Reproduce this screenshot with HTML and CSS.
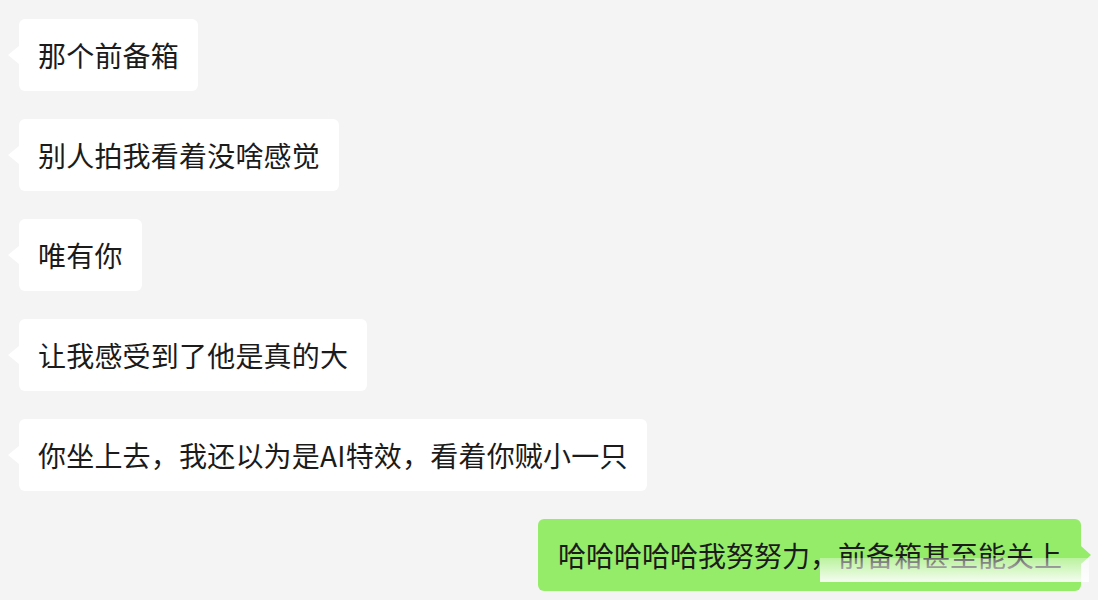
FILE: index.html
```html
<!DOCTYPE html>
<html lang="zh-CN">

<head>
    <meta charset="UTF-8">
    <meta name="viewport" content="width=device-width, initial-scale=1.0">
    <title>聊天记录</title>
    <link rel="stylesheet" href="styles.css">
</head>

<body>
    <div class="chat">
        <div class="row left">
            <div class="bubble">那个前备箱</div>
        </div>
        <div class="row left">
            <div class="bubble">别人拍我看着没啥感觉</div>
        </div>
        <div class="row left">
            <div class="bubble">唯有你</div>
        </div>
        <div class="row left">
            <div class="bubble">让我感受到了他是真的大</div>
        </div>
        <div class="row left">
            <div class="bubble">你坐上去，我还以为是AI特效，看着你贼小一只</div>
        </div>
        <div class="row right">
            <div class="bubble">哈哈哈哈哈我努努力，前备箱甚至能关上
                <span class="watermark"></span>
            </div>
        </div>
    </div>
</body>

</html>
```

FILE: styles.css
```css
body {
    margin: 0;
    padding: 0;
    background-color: #f4f4f4;
    font-family: "Noto Sans CJK SC", "Noto Sans", sans-serif;
}

.chat {
    display: flex;
    flex-direction: column;
    gap: 28px;
    padding: 19px 17px 0 19px;
}

.row {
    display: flex;
}

.row.right {
    justify-content: flex-end;
}

.bubble {
    position: relative;
    height: 72px;
    box-sizing: border-box;
    display: flex;
    align-items: center;
    padding: 0 19px;
    font-size: 28px;
    letter-spacing: 0.2px;
    color: #1b1b1b;
    background-color: #ffffff;
    border-radius: 6px;
    white-space: nowrap;
}

.bubble::before {
    content: "";
    position: absolute;
    top: 50%;
    margin-top: -9px;
    border-top: 9px solid transparent;
    border-bottom: 9px solid transparent;
}

.left .bubble::before {
    left: -11px;
    border-right: 11px solid #ffffff;
}

.right .bubble {
    background-color: #95ec69;
    padding: 0 19px 0 20px;
    letter-spacing: 0;
}

.right .bubble::before {
    right: -10px;
    border-left: 10px solid #95ec69;
}

.watermark {
    position: absolute;
    left: 282px;
    right: -8px;
    top: 39px;
    height: 24px;
    background: linear-gradient(to bottom, rgba(255, 255, 255, 0.35), rgba(255, 255, 255, 0.9));
}
```
